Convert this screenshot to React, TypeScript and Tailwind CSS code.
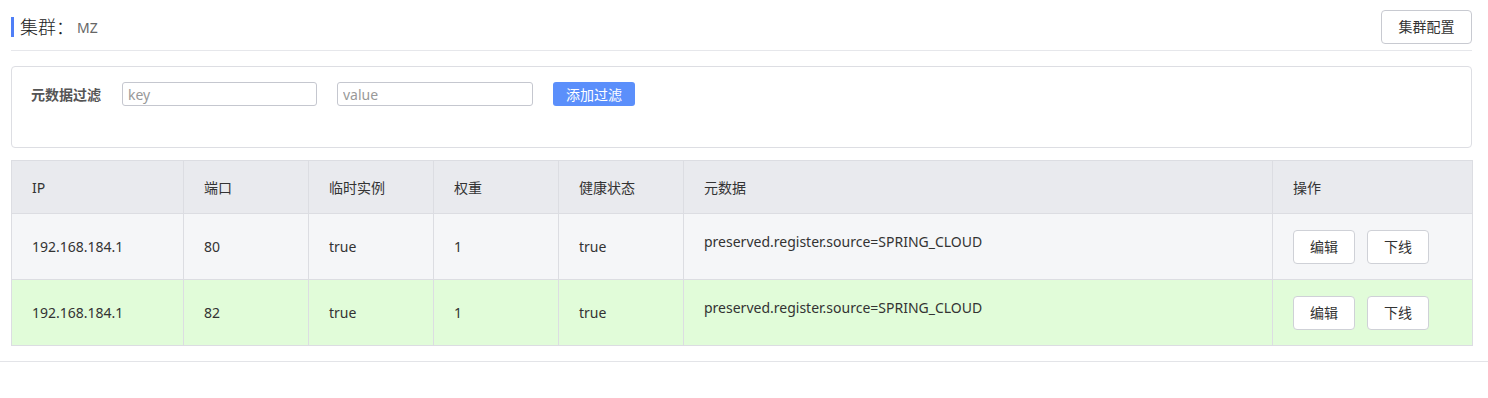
import React from 'react';

const COLS = [
  { key: 'ip', label: 'IP', w: 'w-[172px]' },
  { key: 'port', label: '端口', w: 'w-[125px]' },
  { key: 'eph', label: '临时实例', w: 'w-[125px]' },
  { key: 'weight', label: '权重', w: 'w-[125px]' },
  { key: 'health', label: '健康状态', w: 'w-[125px]' },
  { key: 'meta', label: '元数据', w: 'w-[589px]' },
  { key: 'op', label: '操作', w: '' },
];

const ROWS = [
  { ip: '192.168.184.1', port: '80', eph: 'true', weight: '1', health: 'true', meta: 'preserved.register.source=SPRING_CLOUD', bg: 'bg-[#f5f6f8]' },
  { ip: '192.168.184.1', port: '82', eph: 'true', weight: '1', health: 'true', meta: 'preserved.register.source=SPRING_CLOUD', bg: 'bg-[#e1fcd9]' },
];

const font = { fontFamily: '"Noto Sans", "Noto Sans CJK SC", sans-serif' };

const App: React.FC = () => {
  return (
    <div className="w-[1488px] h-[398px] bg-white text-[#333]" style={font}>
      <div className="pl-[11px] pr-[16px] pb-[15px] border-b border-[#e3e4e8]">
        {/* title */}
        <div className="flex items-center justify-between h-[51px] pt-[3px] border-b border-[#e6e7eb]">
          <div className="flex items-center">
            <span className="w-[3px] h-[20px] bg-[#4f7ff7]" />
            <span className="ml-[6px] text-[18px] leading-none font-light text-[#222]">集群：</span>
            <span className="ml-[3px] text-[14px] text-[#666] mt-[2px]">MZ</span>
          </div>
          <button className="w-[91px] h-[34px] border border-[#c8cad1] rounded text-[14px] text-[#333] bg-white">集群配置</button>
        </div>

        {/* filter */}
        <div className="mt-[15px] h-[82px] border border-[#dddee3] rounded pt-[15px] pl-[19px]">
          <div className="flex items-center h-[24px]">
            <span className="text-[14px] font-bold text-[#555] w-[91px]">元数据过滤</span>
            <input placeholder="key" className="w-[195px] h-[24px] border border-[#c5c7cf] rounded-[3px] px-[5px] text-[14px] placeholder-[#999] outline-none" />
            <input placeholder="value" className="ml-[20px] w-[196px] h-[24px] border border-[#c5c7cf] rounded-[3px] px-[5px] text-[14px] placeholder-[#999] outline-none" />
            <button className="ml-[20px] w-[82px] h-[24px] rounded-[3px] bg-[#5b8ffb] text-white text-[14px]">添加过滤</button>
          </div>
        </div>

        {/* table */}
        <table className="mt-[12px] w-[1462px] border-collapse text-[14px] table-fixed">
          <thead>
            <tr className="h-[53px] bg-[#e9eaee]">
              {COLS.map((c) => (
                <th key={c.key} className={`${c.w} text-left font-normal pl-[20px] border border-[#dcdde2]`}>{c.label}</th>
              ))}
            </tr>
          </thead>
          <tbody>
            {ROWS.map((r, i) => (
              <tr key={i} className={`h-[66px] ${r.bg}`}>
                <td className="pl-[20px] border border-[#dcdde2]">{r.ip}</td>
                <td className="pl-[20px] border border-[#dcdde2]">{r.port}</td>
                <td className="pl-[20px] border border-[#dcdde2]">{r.eph}</td>
                <td className="pl-[20px] border border-[#dcdde2]">{r.weight}</td>
                <td className="pl-[20px] border border-[#dcdde2]">{r.health}</td>
                <td className="pl-[20px] pt-[17px] align-top border border-[#dcdde2]">{r.meta}</td>
                <td className="pl-[20px] border border-[#dcdde2]">
                  <div className="flex gap-[12px]">
                    <button className="w-[62px] h-[34px] bg-white border border-[#cfd1d7] rounded text-[14px]">编辑</button>
                    <button className="w-[62px] h-[34px] bg-white border border-[#cfd1d7] rounded text-[14px]">下线</button>
                  </div>
                </td>
              </tr>
            ))}
          </tbody>
        </table>
      </div>
    </div>
  );
};

export default App;
